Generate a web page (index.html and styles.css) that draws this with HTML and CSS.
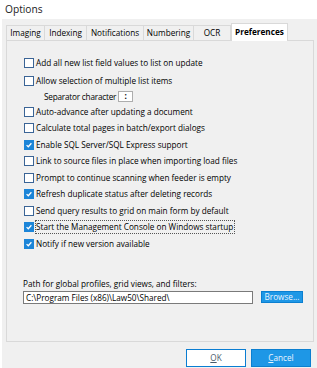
FILE: index.html
```html
<!DOCTYPE html>
<html>
<head>
<meta charset="utf-8">
<link rel="stylesheet" href="styles.css">
</head>
<body>
<div class="title">Options</div>
<div class="dialog">
  <div class="tabs">
    <div class="tab t-imaging">Imaging</div>
    <div class="tab t-indexing">Indexing</div>
    <div class="tab t-notif">Notifications</div>
    <div class="tab t-numbering">Numbering</div>
    <div class="tab t-ocr">OCR</div>
    <div class="tab t-pref selected">Preferences</div>
  </div>
  <div class="panel">
    <div class="row first"><span class="cb"></span><span class="lbl">Add all new list field values to list on update</span></div>
    <div class="row second"><span class="cb"></span><span class="lbl">Allow selection of multiple list items</span></div>
    <div class="sep-row"><span class="lbl sep-lbl">Separator character</span><span class="sep-box">:</span></div>
    <div class="row"><span class="cb"></span><span class="lbl">Auto-advance after updating a document</span></div>
    <div class="row"><span class="cb"></span><span class="lbl">Calculate total pages in batch/export dialogs</span></div>
    <div class="row"><span class="cb checked"><svg viewBox="0 0 10 10"><polyline points="2,5.2 4.1,7.2 8,2.8"/></svg></span><span class="lbl">Enable SQL Server/SQL Express support</span></div>
    <div class="row"><span class="cb"></span><span class="lbl">Link to source files in place when importing load files</span></div>
    <div class="row"><span class="cb"></span><span class="lbl">Prompt to continue scanning when feeder is empty</span></div>
    <div class="row"><span class="cb checked"><svg viewBox="0 0 10 10"><polyline points="2,5.2 4.1,7.2 8,2.8"/></svg></span><span class="lbl">Refresh duplicate status after deleting records</span></div>
    <div class="row"><span class="cb"></span><span class="lbl">Send query results to grid on main form by default</span></div>
    <div class="row"><span class="cb checked"><svg viewBox="0 0 10 10"><polyline points="2,5.2 4.1,7.2 8,2.8"/></svg></span><span class="lbl focus">Start the Management Console on Windows startup</span></div>
    <div class="row"><span class="cb checked"><svg viewBox="0 0 10 10"><polyline points="2,5.2 4.1,7.2 8,2.8"/></svg></span><span class="lbl">Notify if new version available</span></div>
    <div class="path">
      <div class="path-label">Path for global profiles, grid views, and filters:</div>
      <div class="path-line">
        <div class="path-input">C:\Program Files (x86)\Law50\Shared\</div>
        <div class="btn blue browse">Browse...</div>
      </div>
    </div>
  </div>
  <div class="footer">
    <div class="btn ok"><u>O</u>K</div>
    <div class="btn blue cancel"><u>C</u>ancel</div>
  </div>
</div>
</body>
</html>
```
FILE: styles.css
```css
html, body {
  margin: 0;
  padding: 0;
  background: #ffffff;
}
body {
  width: 317px;
  height: 368px;
  overflow: hidden;
  font-family: "Open Sans", "Noto Sans", sans-serif;
  font-size: 8.2px;
  color: #000;
}
.title {
  height: 19px;
  line-height: 18px;
  padding-left: 5px;
  font-size: 10.2px;
  color: #222;
  box-sizing: border-box;
}
.dialog {
  margin-left: 2px;
  background: #f0f0f0;
  height: 349px;
  padding-top: 4px;
  box-sizing: border-box;
}
.tabs {
  display: flex;
  align-items: flex-end;
  height: 17px;
  padding-left: 4px;
}
.tab {
  box-sizing: border-box;
  height: 15px;
  border: 1px solid #d9d9d9;
  border-bottom: none;
  margin-right: -1px;
  background: #f0f0f0;
  display: flex;
  align-items: center;
  justify-content: center;
  line-height: 1;
}
.t-imaging { width: 39px; }
.t-indexing { width: 43px; }
.t-notif { width: 58px; }
.t-numbering { width: 51px; }
.t-ocr { width: 38px; }
.t-pref { width: 57px; margin-left: 1px; }
.tab.selected {
  height: 18px;
  margin-bottom: -1px;
  background: #ffffff;
  font-weight: 700;
  position: relative;
  z-index: 1;
  padding-bottom: 1px;
}
.panel {
  box-sizing: border-box;
  margin-left: 4px;
  width: 308px;
  height: 302px;
  border: 1px solid #d9d9d9;
  background: #f0f0f0;
  padding: 14px 0 37px 17px;
  display: flex;
  flex-direction: column;
}
.row {
  display: flex;
  align-items: center;
  height: 16.5px;
  white-space: nowrap;
}
.row.second { margin-top: 1.5px; }
.cb {
  box-sizing: border-box;
  width: 10px;
  height: 10px;
  border: 1px solid #3a6496;
  background: #fff;
  margin-right: 2px;
  flex: none;
  display: flex;
}
.cb.checked {
  background: #1c85d8;
  border-color: #1c85d8;
}
.cb svg {
  width: 8px;
  height: 8px;
}
.cb polyline {
  fill: none;
  stroke: #fff;
  stroke-width: 1.6;
}
.lbl { line-height: 12px; }
.lbl.focus {
  outline: 1px dotted #555;
  outline-offset: 0;
  padding: 0 1px 0 0;
}
.sep-row {
  display: flex;
  align-items: center;
  height: 14px;
  padding-left: 20px;
}
.sep-lbl { letter-spacing: -0.2px; }
.sep-box {
  box-sizing: border-box;
  width: 15px;
  height: 11px;
  margin-left: 2px;
  border: 1px solid #adadad;
  background: #fff;
  font-weight: 700;
  display: flex;
  align-items: center;
  justify-content: center;
  line-height: 1;
}
.path {
  margin-top: auto;
  margin-left: -1px;
}
.path-label {
  height: 12px;
  line-height: 12px;
  margin-bottom: 1px;
}
.path-line {
  display: flex;
  align-items: flex-start;
}
.path-input {
  box-sizing: border-box;
  width: 230px;
  height: 13px;
  border: 1px solid #7a7a7a;
  background: #fff;
  padding-left: 2px;
  line-height: 11px;
  white-space: nowrap;
}
.btn {
  box-sizing: border-box;
  display: flex;
  align-items: center;
  justify-content: center;
  line-height: 1;
}
.btn.blue {
  background: #1e97e6;
  border: 1px solid #0b7fd0;
  color: #eaf5ff;
}
.browse {
  width: 42px;
  height: 12px;
  margin-left: 8px;
}
.footer {
  display: flex;
  justify-content: flex-end;
  gap: 5px;
  padding-right: 6px;
  margin-top: 7px;
}
.ok, .cancel {
  width: 60px;
  height: 18px;
}
.ok {
  background: #ffffff;
  border: 1px solid #0a7dd2;
  color: #4a5a6a;
}
.btn u { text-decoration: underline; }
```
